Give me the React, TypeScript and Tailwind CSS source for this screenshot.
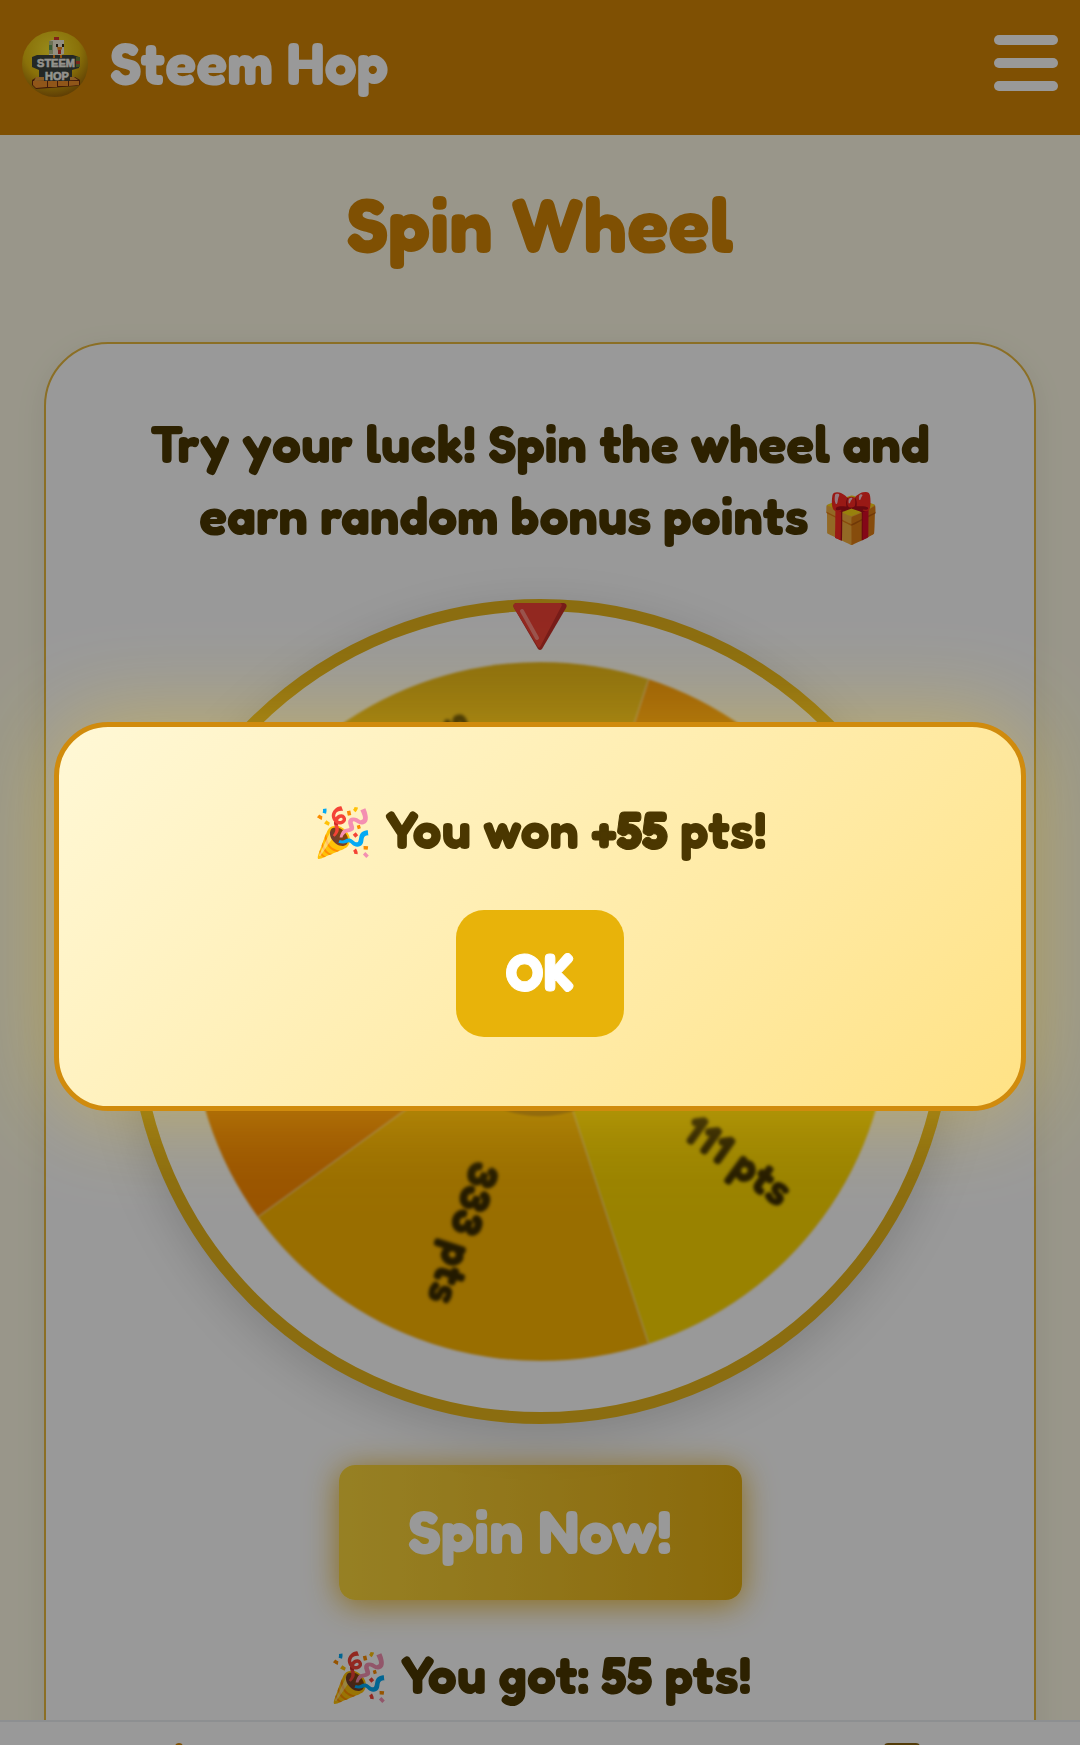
import { useState } from 'react'

const SECTORS = [
  { label: '222 pts', start: -72, color: '#ff9c0a' },
  { label: '111 pts', start: 0, color: '#ffd900' },
  { label: '333 pts', start: 72, color: '#ffb700' },
  { label: '44 pts', start: 144, color: '#ff8c00' },
  { label: '55 pts', start: 216, color: '#e8b818' },
]

const RADIUS = 350

function point(angle: number) {
  const rad = (angle * Math.PI) / 180
  return `${RADIUS * Math.cos(rad)} ${RADIUS * Math.sin(rad)}`
}

function Logo() {
  return (
    <svg viewBox="0 0 66 66" className="size-[66px] shrink-0" role="img" aria-label="Steem Hop logo">
      <defs>
        <radialGradient id="ball" cx="0.45" cy="0.3" r="0.7">
          <stop offset="0" stopColor="#ffe92e" />
          <stop offset="0.6" stopColor="#e6bd10" />
          <stop offset="1" stopColor="#a06a08" />
        </radialGradient>
      </defs>
      <circle cx="33" cy="33" r="33" fill="url(#ball)" />
      {/* platform */}
      <path d="M10 26l5-2h36l6 2v11l-7 2v10H17v-10l-7-3z" fill="#3d443f" />
      <path d="M54 26h4v10h-4z" fill="#6d8433" />
      <path d="M54 30h4v3h-4z" fill="#c8402c" />
      <path d="M10 49l5-3h38l5 3v5l-4 1-40 3-4-4z" fill="#6b2c10" />
      <path d="M11 50h14v6l-11 1-3-3zM26 50h9v6h-9zM36 50h10v5H36zM47 50h10v4l-10 1z" fill="#f0902a" />
      <path d="M14 46h38l4 3-44 1z" fill="#e89c3c" />
      <path d="M22 39h26v11H22z" fill="#3d443f" />
      {/* chicken */}
      <path d="M32 6h5v4h-5z" fill="#d8372a" />
      <path d="M27 10l3-1h12v14l-3 1H27z" fill="#f6efd8" />
      <path d="M27 10h4v13h-4z" fill="#b8bf8c" />
      <path d="M27 14h3v5h-3z" fill="#5f9a55" />
      <path d="M34 13h2v3h-2zM40 13h2v3h-2z" fill="#33291a" />
      <path d="M35 16h5v2l-2 2h-2z" fill="#f08b1c" />
      <path d="M36 19h3v4h-3z" fill="#d8372a" />
      <path d="M31 24h2v3h-2zM38 24h2v3h-2z" fill="#f08b1c" />
      <g
        fill="#f7f5ec"
        fontFamily="Liberation Sans Narrow, Liberation Sans"
        fontWeight="700"
        textAnchor="middle"
        stroke="#f7f5ec"
        strokeWidth="0.6"
      >
        <text x="34" y="36" fontSize="11">STEEM</text>
        <text x="35" y="49" fontSize="11">HOP</text>
      </g>
    </svg>
  )
}

function Wheel() {
  return (
    <div className="relative mt-[46px] size-[825px] shrink-0 rounded-full border-[12px] border-[#e8b61b] bg-white p-[51px] shadow-[0_12px_48px_rgba(0,0,0,0.16)]">
      <svg viewBox="-350 -350 700 700" className="size-full overflow-visible blur-[1px]" role="img" aria-label="Prize wheel">
        {SECTORS.map((s) => (
          <g key={s.label}>
            <path
              d={`M0 0L${point(s.start)}A${RADIUS} ${RADIUS} 0 0 1 ${point(s.start + 72)}Z`}
              fill={s.color}
              stroke="#ffe9c0"
              strokeOpacity="0.3"
              strokeWidth="2"
            />
            <text
              transform={`rotate(${s.start + 36})`}
              x="309"
              y="20"
              textAnchor="end"
              fontSize="44"
              fill="#3b2c00"
              className="blur-[1px]"
            >
              {s.label}
            </text>
          </g>
        ))}
        <circle r="105" fill="#c98a10" />
      </svg>
      {/* pointer */}
      <svg viewBox="0 0 54 47" className="absolute -top-2 left-1/2 h-[47px] w-[54px] -translate-x-1/2" aria-hidden="true">
        <path d="M3 0h48q4 1 2 5L29 46q-2 2-4 0L1 5Q-1 1 3 0z" fill="#c62f29" />
        <path d="M3 0h44q3 1 1 4L27 44q-1 1-2 0L1 5Q-1 1 3 0z" fill="#f44336" />
        <path d="M9 8l15 27" stroke="#ff8a80" strokeWidth="4" strokeLinecap="round" />
      </svg>
    </div>
  )
}

export default function App() {
  const [open, setOpen] = useState(true)

  return (
    <div className="h-screen overflow-hidden bg-[#fffbe6] font-['Fredoka','Lato',sans-serif] font-bold text-[#4b3700]">
      <header className="flex h-[135px] items-center justify-between bg-[#d48606] px-[22px]">
        <div className="flex items-center gap-[22px] pb-2">
          <Logo />
          <span className="pb-0.5 text-[58px] leading-none text-white">Steem Hop</span>
        </div>
        <button type="button" aria-label="Menu" className="flex w-16 flex-col gap-[13px] pb-2.5">
          <span className="h-2.5 rounded-full bg-white" />
          <span className="h-2.5 rounded-full bg-white" />
          <span className="h-2.5 rounded-full bg-white" />
        </button>
      </header>

      <main className="px-11 pt-[43px]">
        <h1 className="text-center text-[77px] leading-[92px] text-[#d48606]">Spin Wheel</h1>
        <section className="mt-[72px] flex flex-col items-center rounded-[64px] border-2 border-[#e8b93f] bg-white px-[60px] pt-16 pb-40 shadow-[0_8px_32px_rgba(0,0,0,0.08)]">
          <p className="text-center text-[52px] leading-[72px]">
            Try your luck! Spin the wheel and
            <br />
            earn random bonus points <span className="text-[48px]">🎁</span>
          </p>
          <Wheel />
          <button
            type="button"
            onClick={() => setOpen(true)}
            className="mt-[41px] h-[135px] w-[403px] rounded-2xl bg-linear-to-r from-[#fbd63c] to-[#e7b00f] pb-1 text-[61px] leading-none text-white shadow-[0_4px_32px_rgba(232,172,15,0.9)]"
          >
            Spin Now!
          </button>
          <p className="mt-[39px] text-[52px] leading-[72px]">
            <span className="text-[48px]">🎉</span> You got: 55 pts!
          </p>
        </section>
      </main>

      <nav className="fixed inset-x-0 bottom-0 flex h-[25px] justify-between overflow-hidden border-t-2 border-[#eceef2] bg-white pt-[21px] pr-[160px] pl-[175px]">
        <a href="#home" aria-label="Home" className="h-8 w-2 rounded-t-full bg-[#d48606]" />
        <a href="#wallet" aria-label="Wallet" className="h-8 w-9 rounded-t-sm bg-[#8a6410]" />
      </nav>

      {open && (
        <div className="fixed inset-0 flex items-center justify-center bg-black/40 px-[54px] pt-[88px]">
          <div
            role="dialog"
            aria-modal="true"
            aria-labelledby="win-message"
            className="flex w-full flex-col items-center rounded-[54px] border-[5px] border-[#d08b0d] bg-linear-135 from-[#fff8d6] to-[#ffe285] px-10 pt-[67px] pb-[69px] shadow-[0_0_90px_rgba(255,210,30,0.4)]"
          >
            <p id="win-message" className="text-[52px] leading-[72px]">
              <span className="text-[48px]">🎉</span> You won{' '}
              <strong className="[-webkit-text-stroke:1px_#4b3700]">+55</strong> pts!
            </p>
            <button
              type="button"
              onClick={() => setOpen(false)}
              className="mt-[43px] h-[127px] w-[168px] rounded-[28px] bg-[#e8b30a] pb-1 text-[52px] leading-none text-white [-webkit-text-stroke:1px_#ffffff]"
            >
              OK
            </button>
          </div>
        </div>
      )}
    </div>
  )
}
